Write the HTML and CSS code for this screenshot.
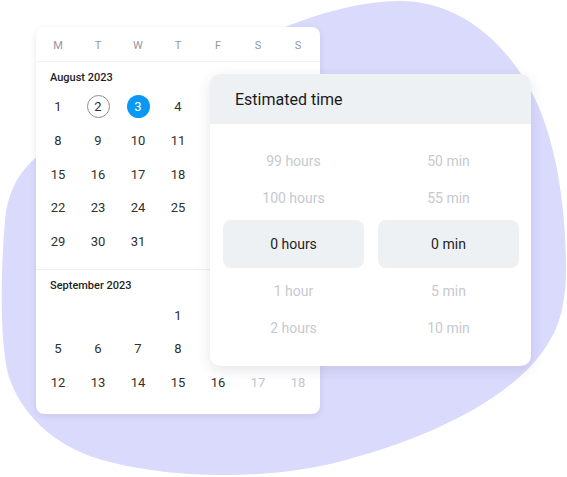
FILE: index.html
```html
<!DOCTYPE html>
<html lang="en">
<head>
<meta charset="utf-8">
<title>Calendar and estimated time</title>
<link rel="stylesheet" href="styles.css">
</head>
<body>
<div class="stage">
  <svg class="blob" width="567" height="477" viewBox="0 0 567 477" aria-hidden="true">
    <path d="M400 1 C465 1 515 50 540 110 C560 160 566 220 566 270 C566 300 560 325 550 340 C520 395 430 440 330 464 C270 478 180 480 110 462 C60 450 25 420 10 380 C0 350 0 280 5 220 C10 170 40 150 80 130 C180 80 300 1 400 1 Z" fill="#d9dafc"/>
  </svg>

  <div class="calendar">
    <div class="weekdays">
      <span>M</span><span>T</span><span>W</span><span>T</span><span>F</span><span>S</span><span>S</span>
    </div>
    <div class="month">
      <div class="month-title">August 2023</div>
      <div class="days">
        <span>1</span><span><b class="ring">2</b></span><span><b class="sel">3</b></span><span>4</span><span></span><span></span><span></span>
        <span>8</span><span>9</span><span>10</span><span>11</span><span></span><span></span><span></span>
        <span>15</span><span>16</span><span>17</span><span>18</span><span></span><span></span><span></span>
        <span>22</span><span>23</span><span>24</span><span>25</span><span></span><span></span><span></span>
        <span>29</span><span>30</span><span>31</span><span></span><span></span><span></span><span></span>
      </div>
    </div>
    <div class="month last">
      <div class="month-title">September 2023</div>
      <div class="days">
        <span></span><span></span><span></span><span>1</span><span></span><span></span><span></span>
        <span>5</span><span>6</span><span>7</span><span>8</span><span></span><span></span><span></span>
        <span>12</span><span>13</span><span>14</span><span>15</span><span>16</span><span class="off">17</span><span class="off">18</span>
      </div>
    </div>
  </div>

  <div class="estimate">
    <div class="est-head">Estimated time</div>
    <div class="est-body">
      <div class="col">
        <div class="item">99 hours</div>
        <div class="item">100 hours</div>
        <div class="item current">0 hours</div>
        <div class="item">1 hour</div>
        <div class="item">2 hours</div>
      </div>
      <div class="col">
        <div class="item">50 min</div>
        <div class="item">55 min</div>
        <div class="item current">0 min</div>
        <div class="item">5 min</div>
        <div class="item">10 min</div>
      </div>
    </div>
  </div>
</div>
</body>
</html>
```

FILE: styles.css
```css
* { box-sizing: border-box; }

html, body {
  margin: 0;
  padding: 0;
  background: #ffffff;
}

body {
  font-family: Roboto, "Liberation Sans", Arial, sans-serif;
  color: #2b2b2b;
}

.stage {
  position: relative;
  width: 567px;
  height: 477px;
  overflow: hidden;
  padding: 27px 0 0 36px;
}

.blob {
  position: absolute;
  left: 0;
  top: 0;
}

.calendar {
  position: relative;
  width: 284px;
  background: #ffffff;
  border-radius: 8px;
  box-shadow: 0 2px 6px rgba(40, 40, 80, 0.10);
}

.weekdays {
  display: grid;
  grid-template-columns: repeat(7, 40px);
  padding: 11px 2px 7px;
  line-height: 16px;
  font-size: 11px;
  color: #93979e;
  text-align: center;
  border-bottom: 1px solid #f1f2f4;
}

.month {
  padding: 8px 0 11px;
  border-bottom: 1px solid #eeeff1;
}

.month.last {
  border-bottom: none;
  padding-bottom: 14px;
}

.month-title {
  padding-left: 14px;
  font-size: 11px;
  font-weight: 500;
  line-height: 16px;
  color: #1f1f1f;
}

.days {
  margin-top: 4px;
  display: grid;
  grid-template-columns: repeat(7, 40px);
  grid-auto-rows: 33.7px;
  padding: 0 2px;
  font-size: 13px;
  color: #2f2f2f;
}

.days span {
  display: flex;
  align-items: center;
  justify-content: center;
}

.days .off {
  color: #c3c6ce;
}

.ring, .sel {
  display: flex;
  align-items: center;
  justify-content: center;
  width: 23px;
  height: 23px;
  border-radius: 50%;
  font-weight: 400;
}

.ring {
  border: 1px solid #8f8f8f;
}

.sel {
  background: #0a98f5;
  color: #ffffff;
}

.estimate {
  position: absolute;
  left: 210px;
  top: 74px;
  width: 321px;
  height: 292px;
  background: #ffffff;
  border-radius: 10px;
  overflow: hidden;
  box-shadow: 0 4px 14px rgba(40, 40, 80, 0.12);
}

.est-head {
  height: 50px;
  display: flex;
  align-items: center;
  padding-left: 25px;
  background: #eef1f4;
  font-size: 16px;
  font-weight: 400;
  color: #1a1a1a;
}

.est-body {
  display: grid;
  grid-template-columns: 141px 141px;
  column-gap: 14px;
  padding: 18px 12px 20px 13px;
}

.item {
  height: 37px;
  display: flex;
  align-items: center;
  justify-content: center;
  font-size: 14px;
  color: #c6c9cf;
}

.item.current {
  height: 48px;
  margin: 4px 0;
  border-radius: 8px;
  background: #eef1f4;
  color: #1e1e1e;
}
```
